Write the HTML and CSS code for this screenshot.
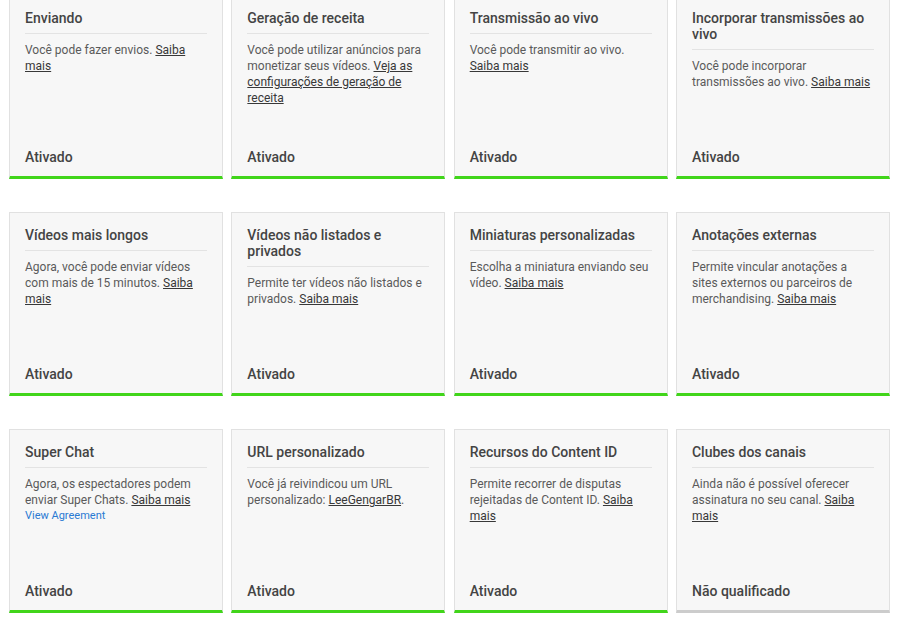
FILE: index.html
```html
<!DOCTYPE html>
<html lang="pt-BR">
<head>
<meta charset="utf-8">
<link rel="stylesheet" href="styles.css">
</head>
<body>
<div class="grid">
  <div class="card on">
    <h3 class="title">Enviando</h3>
    <p class="desc">Você pode fazer envios. <a href="#">Saiba mais</a></p>
    <div class="status">Ativado</div>
  </div>
  <div class="card on">
    <h3 class="title">Geração de receita</h3>
    <p class="desc">Você pode utilizar anúncios para monetizar seus vídeos. <a href="#">Veja as configurações de geração de receita</a></p>
    <div class="status">Ativado</div>
  </div>
  <div class="card on">
    <h3 class="title">Transmissão ao vivo</h3>
    <p class="desc">Você pode transmitir ao vivo. <a href="#">Saiba mais</a></p>
    <div class="status">Ativado</div>
  </div>
  <div class="card on">
    <h3 class="title">Incorporar transmissões ao vivo</h3>
    <p class="desc">Você pode incorporar transmissões ao vivo. <a href="#">Saiba mais</a></p>
    <div class="status">Ativado</div>
  </div>

  <div class="card on">
    <h3 class="title">Vídeos mais longos</h3>
    <p class="desc">Agora, você pode enviar vídeos com mais de 15 minutos. <a href="#">Saiba mais</a></p>
    <div class="status">Ativado</div>
  </div>
  <div class="card on">
    <h3 class="title">Vídeos não listados e privados</h3>
    <p class="desc">Permite ter vídeos não listados e privados. <a href="#">Saiba mais</a></p>
    <div class="status">Ativado</div>
  </div>
  <div class="card on">
    <h3 class="title">Miniaturas personalizadas</h3>
    <p class="desc">Escolha a miniatura enviando seu vídeo. <a href="#">Saiba mais</a></p>
    <div class="status">Ativado</div>
  </div>
  <div class="card on">
    <h3 class="title">Anotações externas</h3>
    <p class="desc">Permite vincular anotações a sites externos ou parceiros de merchandising. <a href="#">Saiba mais</a></p>
    <div class="status">Ativado</div>
  </div>

  <div class="card on">
    <h3 class="title">Super Chat</h3>
    <p class="desc">Agora, os espectadores podem enviar Super Chats. <a href="#">Saiba mais</a></p>
    <a class="agreement" href="#">View Agreement</a>
    <div class="status">Ativado</div>
  </div>
  <div class="card on">
    <h3 class="title">URL personalizado</h3>
    <p class="desc">Você já reivindicou um URL personalizado: <a href="#">LeeGengarBR</a>.</p>
    <div class="status">Ativado</div>
  </div>
  <div class="card on">
    <h3 class="title">Recursos do Content ID</h3>
    <p class="desc">Permite recorrer de disputas rejeitadas de Content ID. <a href="#">Saiba mais</a></p>
    <div class="status">Ativado</div>
  </div>
  <div class="card off">
    <h3 class="title">Clubes dos canais</h3>
    <p class="desc">Ainda não é possível oferecer assinatura no seu canal. <a href="#">Saiba mais</a></p>
    <div class="status">Não qualificado</div>
  </div>
</div>
</body>
</html>
```

FILE: styles.css
```css
html, body {
  margin: 0;
  padding: 0;
  background: #ffffff;
}

body {
  font-family: Roboto, "Noto Sans", Arial, sans-serif;
  overflow: hidden;
}

.grid {
  display: grid;
  grid-template-columns: repeat(4, 1fr);
  column-gap: 8.33px;
  row-gap: 33px;
  margin: -5px 10px 0 9px;
}

.card {
  box-sizing: border-box;
  height: 184px;
  display: flex;
  flex-direction: column;
  background: #f7f7f7;
  border: 1px solid #e1e1e1;
  border-bottom: 3px solid #41d51a;
  padding: 14px 15px 11px;
}

.card.off {
  border-bottom-color: #cccccc;
}

.title {
  margin: 0;
  font-size: 14px;
  font-weight: 500;
  line-height: 16px;
  color: #444444;
  padding-bottom: 7px;
  border-bottom: 1px solid #e3e3e3;
}

.desc {
  margin: 8px 0 0;
  font-size: 12px;
  line-height: 16px;
  color: #5a5a5a;
}

.desc a {
  color: #383838;
  text-decoration: underline;
}

.agreement {
  font-size: 11px;
  line-height: 16px;
  color: #2a7ad3;
  text-decoration: none;
}

.status {
  margin-top: auto;
  font-size: 14px;
  font-weight: 500;
  line-height: 16px;
  color: #444444;
}
```
